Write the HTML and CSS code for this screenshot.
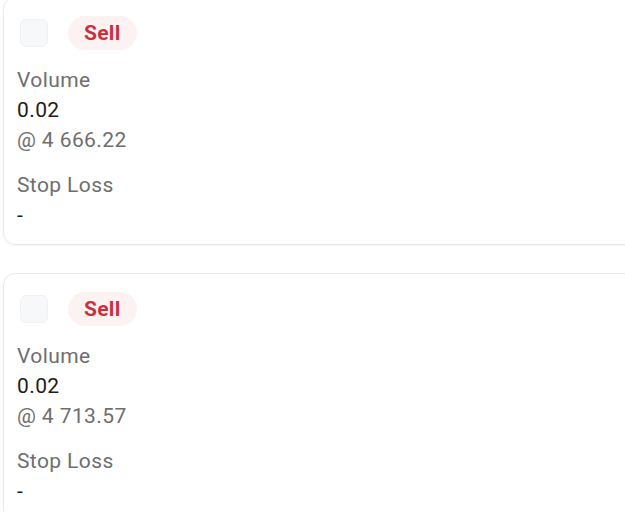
FILE: index.html
```html
<!DOCTYPE html>
<html lang="en">

<head>
    <meta charset="UTF-8">
    <meta name="viewport" content="width=device-width, initial-scale=1.0">
    <title>Orders</title>
    <link rel="stylesheet" href="styles.css">
</head>

<body>
    <div class="order-list">
        <div class="order-card">
            <div class="order-head">
                <span class="check"></span>
                <span class="side side-sell">Sell</span>
            </div>
            <div class="label">Volume</div>
            <div class="value">0.02</div>
            <div class="label">@ 4 666.22</div>
            <div class="label gap-top">Stop Loss</div>
            <div class="value">-</div>
        </div>

        <div class="order-card">
            <div class="order-head">
                <span class="check"></span>
                <span class="side side-sell">Sell</span>
            </div>
            <div class="label">Volume</div>
            <div class="value">0.02</div>
            <div class="label">@ 4 713.57</div>
            <div class="label gap-top">Stop Loss</div>
            <div class="value">-</div>
        </div>
    </div>
</body>

</html>
```

FILE: styles.css
```css
body {
    margin: 0;
    font-family: Roboto, "Liberation Sans", Arial, sans-serif;
    background-color: #fff;
    overflow: hidden;
    height: 512px;
}

.order-list {
    display: flex;
    flex-direction: column;
    gap: 28px;
    margin-top: -3px;
    margin-left: 3px;
    width: 660px;
}

.order-card {
    border: 1px solid #e8e8e8;
    border-radius: 12px;
    padding: 18px 13px 14px 13px;
    box-shadow: 0 1px 2px rgba(0, 0, 0, 0.04);
}

.order-head {
    display: flex;
    align-items: center;
    gap: 20px;
    height: 34px;
    margin-bottom: 15px;
}

.check {
    width: 26px;
    height: 26px;
    margin-left: 3px;
    border: 1px solid #f0f1f4;
    border-radius: 6px;
    background-color: #f7f8fa;
}

.side {
    height: 34px;
    line-height: 34px;
    padding: 0 16px;
    border-radius: 17px;
    font-size: 21px;
    font-weight: 700;
    letter-spacing: 0.3px;
}

.side-sell {
    color: #c8323f;
    background-color: #fdf2f2;
}

.label,
.value {
    font-size: 21px;
    line-height: 30px;
    letter-spacing: 0.4px;
}

.label {
    color: #6e6e6e;
}

.value {
    color: #1c1c1c;
}

.gap-top {
    margin-top: 15px;
}
```
